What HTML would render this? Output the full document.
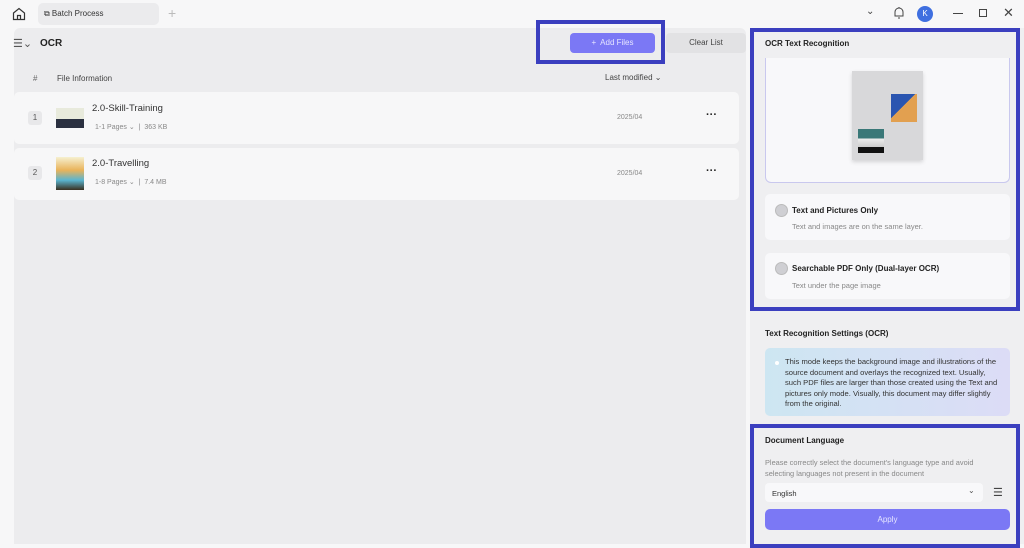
<!DOCTYPE html>
<html><head><style>
*{box-sizing:border-box;margin:0;padding:0}
body{width:1024px;height:544px;overflow:hidden;background:#f7f7f8;font-family:"Liberation Sans",sans-serif;color:#222;position:relative;font-size:8px}
.a{position:absolute}
.main{left:14px;top:28px;width:732px;height:516px;background:#ececee;border-radius:6px 6px 0 0}
.row{left:14px;width:725px;height:52px;background:#f7f7f8;border-radius:5px}
.rp{left:750px;top:28px;width:274px;height:516px;background:#efeff1}
.card{background:#f8f8fa;border-radius:5px}
.b{font-weight:bold}
.g{color:#888}
.radio{width:13px;height:13px;border-radius:50%;background:#cfcfd3;border:1px solid #bbb}
</style></head><body>
<svg class="a" style="left:11px;top:6px" width="16" height="16" viewBox="0 0 16 16"><path d="M2.5 7 L8 2.5 L13.5 7 V13.5 H2.5 Z M6.5 13.5 V9.5 H9.5 V13.5" fill="none" stroke="#333" stroke-width="1.2"/></svg>
<div class="a" style="left:38px;top:3px;width:121px;height:22px;background:#ebebed;border-radius:5px"></div>
<div class="a" style="left:44px;top:9px;font-size:8px;color:#333">⧉ Batch Process</div>
<div class="a" style="left:168px;top:5px;font-size:14px;color:#bbb">+</div>
<div class="a" style="left:866px;top:6px;font-size:10px;color:#444">⌄</div>
<svg class="a" style="left:893px;top:6px" width="12" height="14" viewBox="0 0 12 14"><path d="M2 10 V6 a4 4 0 0 1 8 0 V10 Z M5 12 h2 M6 1 v1" fill="none" stroke="#444" stroke-width="1"/></svg>
<div class="a" style="left:917px;top:6px;width:16px;height:16px;border-radius:50%;background:#3f6fe0;color:#fff;font-size:8px;text-align:center;line-height:16px">K</div>
<div class="a" style="left:953px;top:13px;width:10px;height:1px;background:#444"></div>
<div class="a" style="left:979px;top:9px;width:8px;height:8px;border:1px solid #444"></div>
<div class="a" style="left:1003px;top:5px;font-size:13px;color:#444">✕</div>
<div class="a main"></div>
<div class="a" style="left:13px;top:37px;font-size:11px;color:#555">☰⌄</div>
<div class="a b" style="left:40px;top:38px;font-size:10px">OCR</div>
<div class="a" style="left:570px;top:33px;width:85px;height:20px;background:#7b78f5;border-radius:4px;color:#e6e6ff;font-size:8px;text-align:center;line-height:20px">+&nbsp; Add Files</div>
<div class="a" style="left:536px;top:20px;width:129px;height:44px;border:4px solid #3b3fbf"></div>
<div class="a" style="left:666px;top:33px;width:80px;height:20px;background:#e2e2e4;border-radius:4px;font-size:8px;text-align:center;line-height:20px;color:#444">Clear List</div>
<div class="a g" style="left:33px;top:74px;color:#666">#</div>
<div class="a" style="left:57px;top:74px;color:#444">File Information</div>
<div class="a" style="left:605px;top:73px;color:#444">Last modified ⌄</div>
<div class="a row" style="top:92px"></div>
<div class="a row" style="top:148px"></div>
<div class="a" style="left:28px;top:111px;width:14px;height:14px;border-radius:3px;background:#e8e8ea;font-size:8px;text-align:center;line-height:14px;color:#555">1</div>
<div class="a" style="left:28px;top:166px;width:14px;height:14px;border-radius:3px;background:#e8e8ea;font-size:8px;text-align:center;line-height:14px;color:#555">2</div>
<div class="a" style="left:56px;top:108px;width:28px;height:20px;background:linear-gradient(#e8eadc 55%,#2a3040 55%)"></div>
<div class="a" style="left:56px;top:157px;width:28px;height:33px;background:linear-gradient(#f6f0d0,#e9b35a 40%,#5ab5d0 70%,#3a3020)"></div>
<div class="a" style="left:92px;top:103px;font-size:9.5px;color:#333">2.0-Skill-Training</div>
<div class="a g" style="left:95px;top:123px;font-size:7px">1-1 Pages ⌄ &nbsp;|&nbsp; 363 KB</div>
<div class="a" style="left:92px;top:158px;font-size:9.5px;color:#333">2.0-Travelling</div>
<div class="a g" style="left:95px;top:178px;font-size:7px">1-8 Pages ⌄ &nbsp;|&nbsp; 7.4 MB</div>
<div class="a g" style="left:617px;top:114px;font-size:7px">2025/04</div>
<div class="a g" style="left:617px;top:170px;font-size:7px">2025/04</div>
<div class="a b" style="left:706px;top:109px;font-size:11px;color:#222">···</div>
<div class="a b" style="left:706px;top:165px;font-size:11px;color:#222">···</div>
<div class="a rp"></div>
<div class="a b" style="left:765px;top:39px">OCR Text Recognition</div>
<div class="a" style="left:765px;top:58px;width:245px;height:125px;background:#f8f8fa;border:1px solid #c9c8ee;border-top:none;border-radius:0 0 6px 6px"></div>
<div class="a" style="left:852px;top:71px;width:71px;height:89px;background:#d8d8da;box-shadow:0 2px 4px rgba(0,0,0,.15)"></div>
<div class="a" style="left:891px;top:94px;width:26px;height:28px;background:linear-gradient(135deg,#2a55b0 45%,#e2a050 45%)"></div>
<div class="a" style="left:858px;top:129px;width:26px;height:24px;background:linear-gradient(#3a7878 40%,#eee 40%,#ccc 75%,#111 75%)"></div>
<div class="a card" style="left:765px;top:194px;width:245px;height:46px"></div>
<div class="a radio" style="left:775px;top:204px"></div>
<div class="a b" style="left:792px;top:206px">Text and Pictures Only</div>
<div class="a g" style="left:792px;top:222px;font-size:7.5px">Text and images are on the same layer.</div>
<div class="a card" style="left:765px;top:253px;width:245px;height:46px"></div>
<div class="a radio" style="left:775px;top:262px"></div>
<div class="a b" style="left:792px;top:264px">Searchable PDF Only (Dual-layer OCR)</div>
<div class="a g" style="left:792px;top:281px;font-size:7.5px">Text under the page image</div>
<div class="a" style="left:750px;top:28px;width:270px;height:283px;border:4px solid #3b3fbf"></div>
<div class="a b" style="left:765px;top:329px">Text Recognition Settings (OCR)</div>
<div class="a" style="left:765px;top:348px;width:245px;height:68px;background:linear-gradient(90deg,#cde6f2,#dcdcf6);border-radius:5px"></div>
<div class="a" style="left:785px;top:357px;width:218px;font-size:7.6px;line-height:10.5px;color:#333">This mode keeps the background image and illustrations of the source document and overlays the recognized text. Usually, such PDF files are larger than those created using the Text and pictures only mode. Visually, this document may differ slightly from the original.</div>
<div class="a" style="left:775px;top:361px;width:4px;height:4px;border-radius:50%;background:#fff"></div>
<div class="a b" style="left:765px;top:436px">Document Language</div>
<div class="a g" style="left:765px;top:457px;width:232px;font-size:7.4px;line-height:11px">Please correctly select the document's language type and avoid selecting languages not present in the document</div>
<div class="a" style="left:765px;top:483px;width:218px;height:19px;background:#f8f8fa;border-radius:4px"></div>
<div class="a" style="left:772px;top:489px;font-size:7.5px;color:#333">English</div>
<div class="a" style="left:968px;top:486px;font-size:8px;color:#555">⌄</div>
<div class="a" style="left:993px;top:486px;font-size:11px;color:#444">☰</div>
<div class="a" style="left:765px;top:509px;width:245px;height:21px;background:#7b78f5;border-radius:5px;color:#e6e6ff;text-align:center;line-height:21px">Apply</div>
<div class="a" style="left:750px;top:424px;width:270px;height:124px;border:4px solid #3b3fbf"></div>
</body></html>
